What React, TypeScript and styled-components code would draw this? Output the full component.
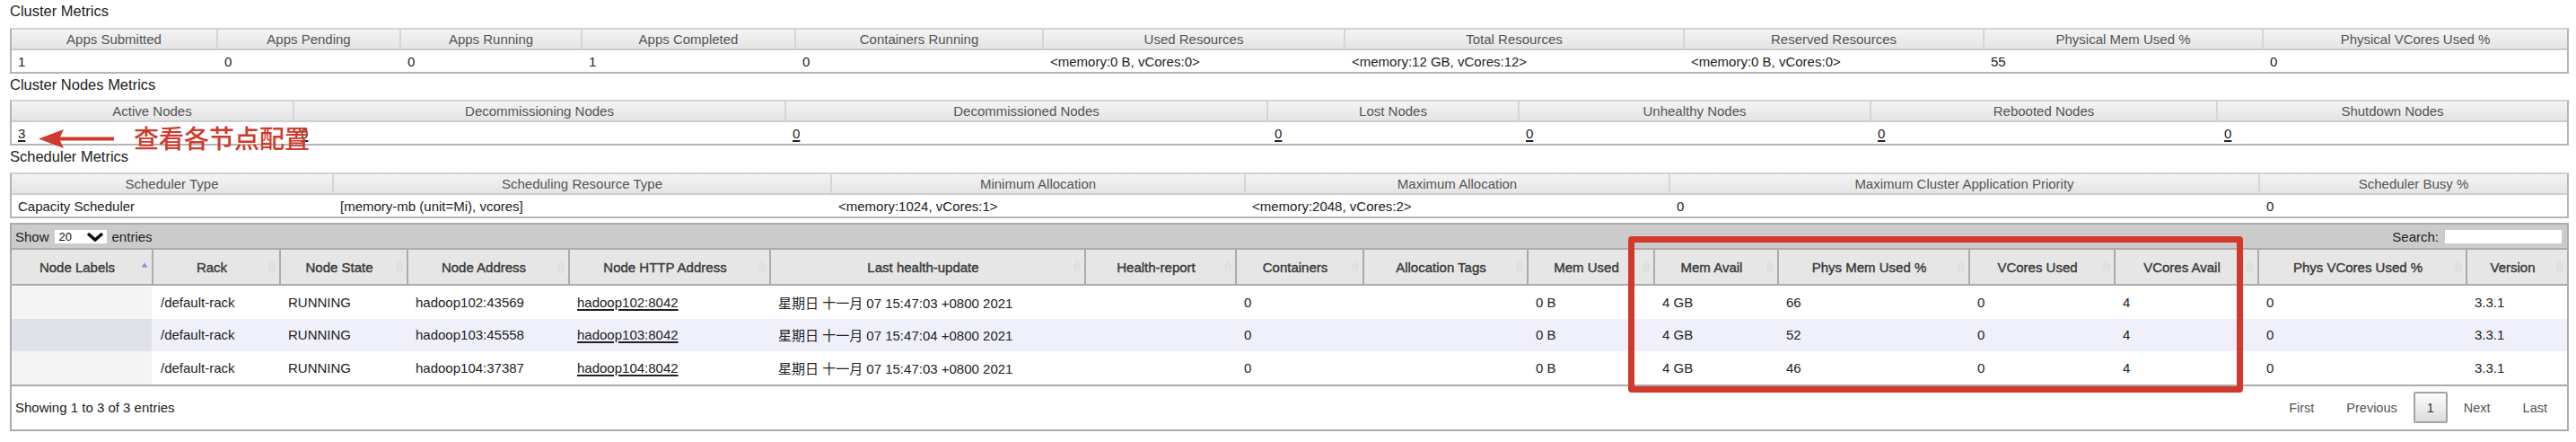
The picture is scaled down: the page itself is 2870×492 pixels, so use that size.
import styled, { createGlobalStyle } from "styled-components";

const GlobalStyle = createGlobalStyle`
  html, body {
    margin: 0;
    padding: 0;
    background: #fff;
  }
  body {
    font-family: "Liberation Sans", Arial, "Noto Sans CJK SC", sans-serif;
    color: #222;
  }
`;

// column widths measured between separators, each list sums to the 2851px table width
const clusterCols = [230, 204, 202, 238, 276, 336, 378, 334, 311, 342];
const nodesMetricCols = [315, 548, 537, 280, 392, 386, 393];
const schedulerCols = [359, 555, 461, 473, 657, 346];
const nodeCols = [158, 142, 142, 180, 224, 351, 168, 142, 183, 141, 138, 213, 162, 160, 232, 115];

const template = (widths: number[]) =>
    widths.map((w, i) => (i === 0 || i === widths.length - 1 ? w - 2 : w) + "px").join(" ");

const Page = styled.div`
  position: relative;
  width: 2870px;
  height: 492px;
  box-sizing: border-box;
  padding: 0 8px 0 11px;
  overflow: hidden;
`;

const SectionTitle = styled.div<{ $height: number }>`
  height: ${p => p.$height}px;
  box-sizing: border-box;
  padding-top: 3px;
  font-size: 16.5px;
  line-height: 19px;
  color: #222;
`;

const Grid = styled.div<{ $cols: number[] }>`
  display: grid;
  grid-template-columns: ${p => template(p.$cols)};
`;

const MetricsBox = styled.div`
  border: 2px solid #b4b4b4;
  border-top-color: #d2d2d2;
  background: #fff;
`;

const MetricsHead = styled(Grid)`
  height: 23px;
  box-sizing: border-box;
  background: linear-gradient(#f4f4f4, #e4e4e4);
  border-bottom: 2px solid #cecece;
`;

const MetricsTh = styled.div`
  display: flex;
  align-items: center;
  justify-content: center;
  border-left: 2px solid #d6d6d6;
  font-size: 15px;
  color: #555;
  white-space: nowrap;
  overflow: hidden;

  &:first-child {
    border-left: none;
  }
`;

const MetricsRow = styled(Grid)`
  height: 24px;
`;

const MetricsTd = styled.div`
  display: flex;
  align-items: center;
  padding-left: 7px;
  border-left: 2px solid transparent;
  font-size: 15px;
  color: #222;
  white-space: nowrap;

  &:first-child {
    border-left: none;
  }
`;

const Link = styled.span`
  color: #222;
  text-decoration: underline;
  text-decoration-thickness: 2px;
  text-underline-offset: 2px;
`;

const NodesBox = styled.div`
  margin-top: 5px;
  border: 2px solid #ababab;
  background: #fff;
`;

const Toolbar = styled.div`
  height: 26px;
  display: flex;
  align-items: center;
  justify-content: space-between;
  padding: 0 6px 0 4px;
  background: #cbcbcb;
  font-size: 15px;
  color: #222;
`;

const ToolGroup = styled.div`
  display: flex;
  align-items: center;
  gap: 5px;
`;

const SelectBox = styled.div`
  width: 58px;
  height: 15px;
  box-sizing: border-box;
  display: flex;
  align-items: center;
  justify-content: space-between;
  padding: 0 3px 0 5px;
  margin: 0 1px;
  background: #fff;
  font-size: 13px;
  color: #111;
`;

const SearchInput = styled.div`
  width: 130px;
  height: 15px;
  margin-left: 2px;
  background: #fff;
`;

const NodesHead = styled(Grid)`
  height: 42px;
  box-sizing: border-box;
  border-top: 2px solid #ababab;
  border-bottom: 2px solid #ababab;
  background: #e6e6e6;
`;

const NodesTh = styled.div`
  position: relative;
  display: flex;
  align-items: center;
  justify-content: center;
  padding: 0 20px 0 10px;
  border-left: 2px solid #ababab;
  font-size: 15px;
  color: #3a3a3a;
  -webkit-text-stroke: 0.4px #3a3a3a;
  white-space: nowrap;

  &:first-child {
    border-left: none;
  }
`;

const SortMark = styled.svg`
  position: absolute;
  right: 4px;
  top: 50%;
  transform: translateY(-50%);
`;

const NodesRow = styled(Grid)<{ $alt: boolean }>`
  height: 36.67px;
  background: ${p => (p.$alt ? "#f0f0fb" : "#fff")};
`;

const NodesTd = styled.div<{ $sorted?: boolean; $alt: boolean }>`
  display: flex;
  align-items: center;
  padding-left: 10px;
  font-size: 15px;
  color: #222;
  white-space: nowrap;
  background: ${p => (p.$sorted ? (p.$alt ? "#e1e1e9" : "#f4f4f4") : "transparent")};

  &:first-child {
    padding-left: 8px;
  }
`;

const Footer = styled.div`
  height: 50px;
  box-sizing: border-box;
  border-top: 2px solid #ababab;
  display: flex;
  align-items: center;
  justify-content: space-between;
  padding: 0 4px;
  font-size: 15px;
  color: #222;
`;

const Pager = styled.div`
  display: flex;
  align-items: center;
`;

const PageLink = styled.span`
  padding: 0 17px;
  margin: 0 1px;
  color: #555;
  font-size: 14.5px;
`;

const PageButton = styled.span`
  width: 38px;
  height: 35px;
  box-sizing: border-box;
  display: flex;
  align-items: center;
  justify-content: center;
  border: 2px solid #a3a3a3;
  border-radius: 2px;
  background: linear-gradient(#fdfdfd, #dcdcdc);
  color: #333;
  font-size: 14.5px;
`;

const Arrow = styled.svg`
  position: absolute;
  left: 40px;
  top: 140px;
`;

const Callout = styled.div`
  position: absolute;
  left: 149px;
  top: 138px;
  font-family: "Noto Sans CJK SC", sans-serif;
  font-size: 28px;
  font-weight: 500;
  line-height: 30px;
  color: #d0392b;
  white-space: nowrap;
`;

const Highlight = styled.div`
  position: absolute;
  left: 1814px;
  top: 263px;
  width: 685px;
  height: 174px;
  box-sizing: border-box;
  border: 7px solid #d0392b;
  border-radius: 4px;
`;

const clusterMetrics = [
    ["Apps Submitted", "1"],
    ["Apps Pending", "0"],
    ["Apps Running", "0"],
    ["Apps Completed", "1"],
    ["Containers Running", "0"],
    ["Used Resources", "<memory:0 B, vCores:0>"],
    ["Total Resources", "<memory:12 GB, vCores:12>"],
    ["Reserved Resources", "<memory:0 B, vCores:0>"],
    ["Physical Mem Used %", "55"],
    ["Physical VCores Used %", "0"],
];

const nodeMetrics = [
    ["Active Nodes", "3"],
    ["Decommissioning Nodes", "0"],
    ["Decommissioned Nodes", "0"],
    ["Lost Nodes", "0"],
    ["Unhealthy Nodes", "0"],
    ["Rebooted Nodes", "0"],
    ["Shutdown Nodes", "0"],
];

const schedulerMetrics = [
    ["Scheduler Type", "Capacity Scheduler"],
    ["Scheduling Resource Type", "[memory-mb (unit=Mi), vcores]"],
    ["Minimum Allocation", "<memory:1024, vCores:1>"],
    ["Maximum Allocation", "<memory:2048, vCores:2>"],
    ["Maximum Cluster Application Priority", "0"],
    ["Scheduler Busy %", "0"],
];

const nodeHeaders = [
    "Node Labels", "Rack", "Node State", "Node Address", "Node HTTP Address",
    "Last health-update", "Health-report", "Containers", "Allocation Tags", "Mem Used",
    "Mem Avail", "Phys Mem Used %", "VCores Used", "VCores Avail", "Phys VCores Used %", "Version",
];

const nodes = [
    { addr: "hadoop102:43569", http: "hadoop102:8042", update: "星期日 十一月 07 15:47:03 +0800 2021", phys: "66" },
    { addr: "hadoop103:45558", http: "hadoop103:8042", update: "星期日 十一月 07 15:47:04 +0800 2021", phys: "52" },
    { addr: "hadoop104:37387", http: "hadoop104:8042", update: "星期日 十一月 07 15:47:03 +0800 2021", phys: "46" },
];

const SortBoth = () => (
    <SortMark width="8" height="16" viewBox="0 0 8 16">
        <polygon points="4,1 7.5,6.8 0.5,6.8" fill="#e6e6e6" stroke="#d4d4d4" strokeWidth="0.8" />
        <polygon points="4,15 7.5,9.2 0.5,9.2" fill="#e6e6e6" stroke="#d4d4d4" strokeWidth="0.8" />
    </SortMark>
);

const SortAsc = () => (
    <SortMark width="8" height="16" viewBox="0 0 8 16">
        <polygon points="4,3.5 7.5,8.5 0.5,8.5" fill="#8a8ee0" />
    </SortMark>
);

const MetricsTable = ({ cols, items, linked }: { cols: number[]; items: string[][]; linked?: boolean }) => (
    <MetricsBox>
        <MetricsHead $cols={cols}>
            {items.map(([label]) => <MetricsTh key={label}>{label}</MetricsTh>)}
        </MetricsHead>
        <MetricsRow $cols={cols}>
            {items.map(([label, value]) => (
                <MetricsTd key={label}>{linked ? <Link>{value}</Link> : value}</MetricsTd>
            ))}
        </MetricsRow>
    </MetricsBox>
);

const App = () => {
    return (
        <Page>
            <GlobalStyle />
            <SectionTitle $height={31}>Cluster Metrics</SectionTitle>
            <MetricsTable cols={clusterCols} items={clusterMetrics} />
            <SectionTitle $height={29}>Cluster Nodes Metrics</SectionTitle>
            <MetricsTable cols={nodesMetricCols} items={nodeMetrics} linked />
            <SectionTitle $height={30}>Scheduler Metrics</SectionTitle>
            <MetricsTable cols={schedulerCols} items={schedulerMetrics} />

            <NodesBox>
                <Toolbar>
                    <ToolGroup>
                        Show
                        <SelectBox>
                            20
                            <svg width="20" height="11" viewBox="0 0 20 11">
                                <polyline points="2,2 10,9 18,2" fill="none" stroke="#111" strokeWidth="3.6" />
                            </svg>
                        </SelectBox>
                        entries
                    </ToolGroup>
                    <ToolGroup>
                        Search:
                        <SearchInput />
                    </ToolGroup>
                </Toolbar>
                <NodesHead $cols={nodeCols}>
                    {nodeHeaders.map((h, i) => (
                        <NodesTh key={h}>
                            {h}
                            {i === 0 ? <SortAsc /> : <SortBoth />}
                        </NodesTh>
                    ))}
                </NodesHead>
                {nodes.map((n, r) => {
                    const alt = r % 2 === 1;
                    const cells = [
                        "", "/default-rack", "RUNNING", n.addr, n.http, n.update, "", "0", "",
                        "0 B", "4 GB", n.phys, "0", "4", "0", "3.3.1",
                    ];
                    return (
                        <NodesRow key={n.addr} $cols={nodeCols} $alt={alt}>
                            {cells.map((c, i) => (
                                <NodesTd key={i} $sorted={i === 0} $alt={alt}>
                                    {i === 4 ? <Link>{c}</Link> : c}
                                </NodesTd>
                            ))}
                        </NodesRow>
                    );
                })}
                <Footer>
                    <span>Showing 1 to 3 of 3 entries</span>
                    <Pager>
                        <PageLink>First</PageLink>
                        <PageLink>Previous</PageLink>
                        <PageButton>1</PageButton>
                        <PageLink>Next</PageLink>
                        <PageLink>Last</PageLink>
                    </Pager>
                </Footer>
            </NodesBox>

            <Arrow width="92" height="30" viewBox="0 0 92 30">
                <polygon points="3,14.5 31,4 27,12.5 87,12.5 87,16.5 27,16.5 31,25" fill="#d0392b" />
            </Arrow>
            <Callout>查看各节点配置</Callout>
            <Highlight />
        </Page>
    );
};

export default App;
